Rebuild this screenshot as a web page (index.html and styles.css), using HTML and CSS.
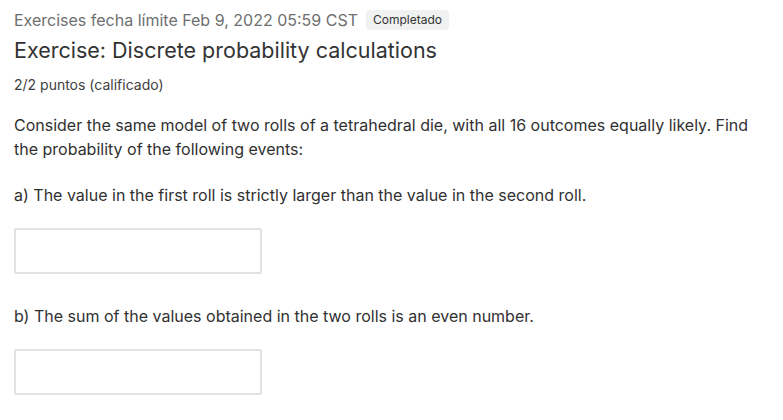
FILE: index.html
```html
<!DOCTYPE html>
<html>
<head>
<meta charset="utf-8">
<link rel="stylesheet" href="styles.css">
</head>
<body>
<div class="page">
  <div class="meta">
    <span class="deadline">Exercises fecha límite Feb 9, 2022 05:59 CST</span>
    <span class="badge">Completado</span>
  </div>
  <h2 class="title">Exercise: Discrete probability calculations</h2>
  <div class="points">2/2 puntos (calificado)</div>
  <p class="text intro">Consider the same model of two rolls of a tetrahedral die, with all 16 outcomes equally likely. Find the probability of the following events:</p>
  <p class="text q">a) The value in the first roll is strictly larger than the value in the second roll.</p>
  <input class="answer" type="text">
  <p class="text q2">b) The sum of the values obtained in the two rolls is an even number.</p>
  <input class="answer" type="text">
</div>
</body>
</html>
```
FILE: styles.css
```css
html, body {
  margin: 0;
  padding: 0;
  background: #fff;
}
.page {
  padding: 9px 14px 0 14px;
  font-family: Inter, "Noto Sans", sans-serif;
  color: #313131;
  width: 750px;
}
.meta {
  display: flex;
  align-items: center;
  gap: 8px;
  height: 22px;
}
.deadline {
  font-size: 16px;
  color: #6f6f6f;
}
.badge {
  font-size: 12px;
  color: #333;
  background: #f0f1f1;
  border-radius: 4px;
  padding: 2px 7px;
  line-height: 16px;
}
.title {
  margin: 4px 0 0 0;
  font-size: 21.5px;
  font-weight: 400;
  line-height: 30px;
  color: #333;
}
.points {
  margin-top: 11px;
  font-size: 14px;
  line-height: 18px;
  color: #414141;
}
.text {
  font-size: 16px;
  line-height: 24px;
  margin: 0;
}
.intro {
  margin-top: 19px;
}
.q {
  margin-top: 22px;
}
.q2 {
  margin-top: 30px;
}
.answer {
  display: block;
  box-sizing: border-box;
  width: 248px;
  height: 46px;
  border: 2px solid #e2e2e2;
  border-radius: 2px;
  margin-top: 21px;
  background: #fff;
}
```
